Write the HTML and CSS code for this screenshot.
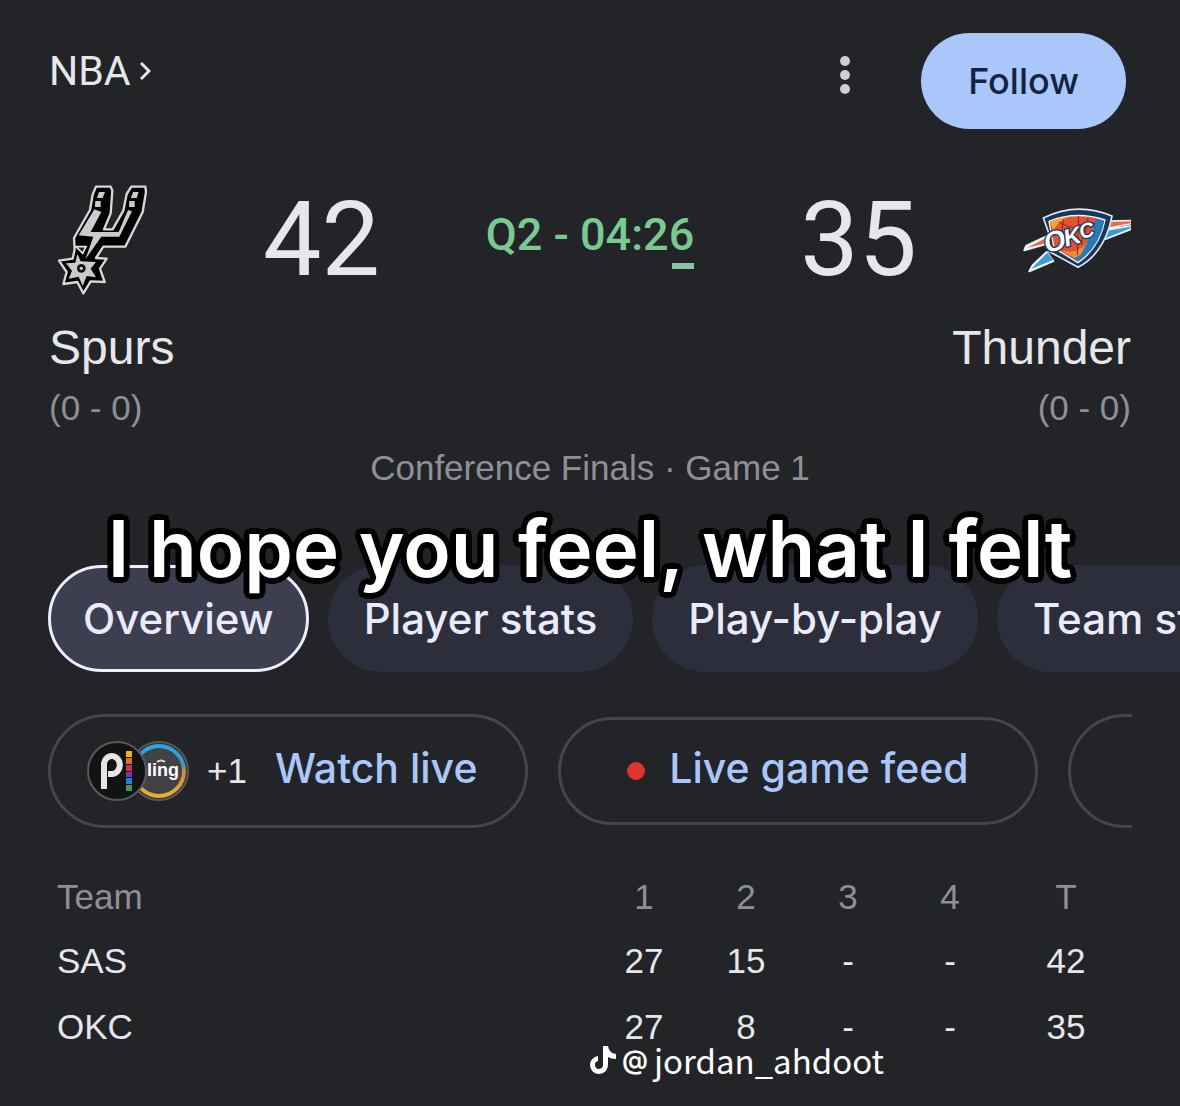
FILE: index.html
```html
<!DOCTYPE html>
<html lang="en">
<head>
  <meta charset="UTF-8">
  <meta name="viewport" content="width=device-width, initial-scale=1.0">
  <title>Spurs vs Thunder</title>
  <link rel="stylesheet" href="styles.css">
</head>
<body>
<!-- Header -->
<header class="top-bar">
  <a href="#" class="league">NBA
    <svg class="chevron" viewBox="0 0 12 20" aria-hidden="true"><path d="M2 2l8 8-8 8" fill="none" stroke="currentColor" stroke-width="3"/></svg>
  </a>
  <button type="button" class="more-btn" aria-label="More options">
    <svg viewBox="0 0 10 38" aria-hidden="true"><circle cx="5" cy="5" r="5"/><circle cx="5" cy="19" r="5"/><circle cx="5" cy="33" r="5"/></svg>
  </button>
  <button type="button" class="follow-btn">Follow</button>
</header>

<main>
  <!-- Score -->
  <section class="scoreboard">
    <div class="score-row">
      <svg class="team-logo" viewBox="27 40 324 340" role="img" aria-label="Spurs">
        <path d="M168 50L212 50L217 62L212 130L192 178L218 178L250 122L260 72L274 50L316 50L318 66L308 126L256 230L190 230L168 264L200 266L180 296L194 336L152 334L130 370L112 336L70 342L80 306L57 272L98 266L104 238L102 204L150 120L158 74Z" fill="#000" stroke="#d6d8da" stroke-width="7" stroke-linejoin="round"/>
        <path d="M163 118L184 126L152 186L236 186L264 120L276 124L238 200L184 200L136 268L160 200L116 196Z" fill="#c9cccf"/>
        <path d="M177 66h18l-7 18h-17zM166 93h16v18h-17zM279 66h17l-6 18h-17zM268 93h16v18h-17z" fill="#c9cccf"/>
        <path d="M108 230h30l-10 20z" fill="#232428" stroke="#e4e4e4" stroke-width="5"/>
        <path d="M112 252L122 274L168 276L152 296L168 322L140 318L128 348L116 320L86 326L96 302L78 280L106 278Z" fill="#c9cccf"/>
        <circle cx="124" cy="295" r="13" fill="#111"/>
        <circle cx="124" cy="295" r="5" fill="#c9cccf"/>
      </svg>
      <span class="score">42</span>
      <span class="clock">Q2 - 04:2<span class="tick">6</span></span>
      <span class="score">35</span>
      <svg class="team-logo" viewBox="39 45 324 210" role="img" aria-label="Thunder">
        <path d="M112 138L48 168l-5 13 68-20zM110 186l-42 40-10 18 72-31zM292 94l72-2v8l-64 14zM292 120l72-12v9l-78 30z" fill="#e9f2f7" stroke="#e9f2f7" stroke-width="6" stroke-linejoin="round"/>
        <path d="M112 142l-60 31 60-14zM294 96l68-2v6l-66 12z" fill="#ea6a4c"/>
        <path d="M112 188l-48 48 66-26zM292 122l70-12v5l-74 29z" fill="#3d9bd4"/>
        <path d="M100 84q100-50 206-6l-8 34q-28 86-94 120-50-28-88-48l2-50z" fill="#17375f" stroke="#dde9f2" stroke-width="5" stroke-linejoin="round"/>
        <path d="M117 94q82-33 168-4-16 84-81 128-36-22-72-44z" fill="#e4532d" stroke="#eef4f8" stroke-width="4"/>
        <path d="M119 96q28-12 62-17-38 14-50 42z" fill="#f6a531"/>
        <path d="M256 86l27 6q-16 80-79 122l-24-14q64-28 76-114z" fill="#1f7dbd"/>
        <path d="M150 180q54 18 84-26l-22 40-18 11z" fill="#f08a35"/>
        <path d="M206 78q-2 66-4 116M146 96q56 36 110 4M160 88q-10 46 14 86M234 84q-4 46-24 76" fill="none" stroke="#7b2a36" stroke-width="3"/>
        <g class="okc-text">
          <text transform="rotate(-16 110 190)" x="110" y="190" font-size="84">O</text>
          <text transform="rotate(-16 168 170)" x="168" y="170" font-size="72">K</text>
          <text transform="rotate(-16 214 148)" x="214" y="148" font-size="62">C</text>
        </g>
      </svg>
    </div>
    <div class="names-row">
      <div class="team">
        <a href="#" class="team-name">Spurs</a>
        <span class="record">(0 - 0)</span>
      </div>
      <div class="team team-right">
        <a href="#" class="team-name">Thunder</a>
        <span class="record">(0 - 0)</span>
      </div>
    </div>
    <p class="stage">Conference Finals · Game 1</p>
  </section>

  <!-- Tabs -->
  <nav class="tabs">
    <button type="button" class="tab active">Overview</button>
    <button type="button" class="tab">Player stats</button>
    <button type="button" class="tab">Play-by-play</button>
    <button type="button" class="tab">Team stats</button>
    <p class="caption">I hope you feel, what I felt</p>
  </nav>

  <!-- Watch links -->
  <div class="actions">
    <a href="#" class="action action-watch">
      <svg class="providers" viewBox="0 0 102 60" aria-hidden="true">
        <defs>
          <linearGradient id="ring" x1="0" y1="0" x2="0" y2="1">
            <stop offset="0.1" stop-color="#2ba6df"/>
            <stop offset="0.4" stop-color="#3a98bd"/>
            <stop offset="0.5" stop-color="#d08a2e"/>
            <stop offset="1" stop-color="#e5b32f"/>
          </linearGradient>
        </defs>
        <circle cx="72" cy="30" r="29" fill="#2b2c2e" stroke="#58595c" stroke-width="2"/>
        <circle cx="72" cy="30" r="25" fill="#414245" stroke="url(#ring)" stroke-width="4"/>
        <text class="sling-text" x="50" y="35">sling</text>
        <path d="M70 21q4-3 8 0" fill="none" stroke="#ddd" stroke-width="2"/>
        <circle cx="30" cy="30" r="29" fill="#131314" stroke="#58595c" stroke-width="2"/>
        <path d="M17 48V22a8 9 0 1 1 8 11h-4" fill="none" stroke="#e6e6e6" stroke-width="6"/>
        <path d="M39 10h6v6h-6z" fill="#edb62c"/><path d="M39 17h6v6h-6z" fill="#e36a2c"/>
        <path d="M39 24h6v6h-6z" fill="#d22b4b"/><path d="M39 31h6v5h-6z" fill="#6d3bb5"/>
        <path d="M39 37h6v6h-6z" fill="#2685cf"/><path d="M39 44h6v6h-6z" fill="#3a9b50"/>
      </svg>
      <span class="plus">+1</span>
      <span class="action-label">Watch live</span>
    </a>
    <a href="#" class="action action-feed">
      <span class="live-dot"></span>
      <span class="action-label">Live game feed</span>
    </a>
    <a href="#" class="action" aria-label="More"></a>
  </div>

  <!-- Line score -->
  <section class="line-score">
    <table>
      <thead>
        <tr><th class="col-team">Team</th><th>1</th><th>2</th><th>3</th><th>4</th><th class="col-total">T</th></tr>
      </thead>
      <tbody>
        <tr><td class="col-team">SAS</td><td>27</td><td>15</td><td>-</td><td>-</td><td>42</td></tr>
        <tr><td class="col-team">OKC</td><td>27</td><td>8</td><td>-</td><td>-</td><td>35</td></tr>
      </tbody>
    </table>
    <div class="credit">
      <svg class="note" viewBox="0 0 26 30" aria-hidden="true"><path d="M13 1h5q1 7 8 8v5q-5 0-8-2v8a9 9 0 1 1-10-9v5a4 4 0 1 0 5 4z" fill="#fff"/></svg>
      <span class="at">@</span>
      <span>jordan_ahdoot</span>
    </div>
  </section>
</main>
</body>
</html>
```
FILE: styles.css
```css
:root {
  --bg: #232428;
  --text: #e6e7eb;
  --muted: #8f9094;
  --blue: #a9c7fa;
  --green: #78ca90;
  --chip: #2d2e3b;
  --line: #454649;
}

* {
  margin: 0;
  padding: 0;
  box-sizing: border-box;
}

body {
  background-color: var(--bg);
  color: var(--text);
  font-family: "Liberation Sans", Arial, sans-serif;
}

a {
  color: inherit;
  text-decoration: none;
}

button {
  border: none;
  cursor: pointer;
}

/* Header */
.top-bar {
  display: flex;
  align-items: center;
  padding: 33px 54px 0 49px;
}

.league {
  display: flex;
  align-items: center;
  gap: 8px;
  margin-right: auto;
  padding-bottom: 20px;
  font-family: Roboto, sans-serif;
  font-size: 41px;
  line-height: 48px;
}

.chevron {
  width: 12px;
  height: 20px;
}

.more-btn {
  display: flex;
  margin-right: 71px;
  padding-bottom: 12px;
  background: none;
}

.more-btn svg {
  width: 10px;
  height: 38px;
  fill: #cfcdd6;
}

.follow-btn {
  padding: 0 47px;
  border-radius: 48px;
  background-color: var(--blue);
  color: #14233f;
  font-family: Inter, sans-serif;
  font-size: 36px;
  font-weight: 500;
  line-height: 96px;
}

/* Score */
.scoreboard {
  padding: 54px 49px 0;
}

.score-row {
  display: flex;
  justify-content: space-between;
  align-items: center;
}

.team-logo {
  width: 108px;
  height: 114px;
}

.okc-text {
  fill: #fff;
  stroke: #17375f;
  stroke-width: 8px;
  stroke-linejoin: round;
  paint-order: stroke;
  font-weight: bold;
  font-style: italic;
}

.score {
  font-family: Roboto, sans-serif;
  font-size: 104px;
  line-height: 114px;
}

.clock {
  padding-bottom: 10px;
  color: var(--green);
  font-family: Roboto, sans-serif;
  font-size: 45px;
  font-weight: 500;
  line-height: 50px;
}

.tick {
  position: relative;
}

.tick::after {
  content: "";
  position: absolute;
  right: 0;
  bottom: -8px;
  width: 22px;
  height: 6px;
  background-color: #8cc3a4;
}

.names-row {
  display: flex;
  justify-content: space-between;
  padding-top: 21px;
}

.team {
  display: flex;
  flex-direction: column;
}

.team-right {
  align-items: flex-end;
}

.team-name {
  font-size: 48px;
  line-height: 60px;
}

.record,
.stage {
  color: var(--muted);
  font-size: 35px;
  line-height: 60px;
}

.stage {
  text-align: center;
}

/* Tabs */
.tabs {
  position: relative;
  display: flex;
  gap: 19px;
  padding: 67px 0 0 48px;
  overflow: hidden;
}

.tab {
  flex: none;
  height: 107px;
  padding: 0 36px;
  border-radius: 54px;
  background-color: var(--chip);
  color: #e9eafb;
  font-family: Inter, sans-serif;
  font-size: 42px;
  font-weight: 500;
}

.tab.active {
  padding: 0 32px;
  border: 3px solid #eeeefa;
  background-color: #3d3f51;
}

.caption {
  position: absolute;
  top: 0;
  left: 0;
  width: 100%;
  color: #fff;
  font-family: Inter, sans-serif;
  font-size: 78px;
  font-weight: 600;
  line-height: 102px;
  text-align: center;
  white-space: nowrap;
  text-shadow:
    6px 0 #000, 5px 3px #000, 4px 4px #000, 3px 5px #000,
    0 6px #000, -3px 5px #000, -4px 4px #000, -5px 3px #000,
    -6px 0 #000, -5px -3px #000, -4px -4px #000, -3px -5px #000,
    0 -6px #000, 3px -5px #000, 4px -4px #000, 5px -3px #000;
}

/* Watch links */
.actions {
  display: flex;
  align-items: center;
  gap: 30px;
  margin: 42px 48px 0;
  overflow: hidden;
}

.action {
  display: flex;
  flex: none;
  justify-content: center;
  align-items: center;
  width: 480px;
  height: 114px;
  border: 3px solid var(--line);
  border-radius: 57px;
  color: var(--blue);
  font-family: Inter, sans-serif;
  font-size: 41px;
  font-weight: 500;
}

.action-label {
  padding-bottom: 6px;
}

.action-watch {
  justify-content: flex-start;
  gap: 18px;
  padding-left: 36px;
}

.action-feed {
  gap: 24px;
  height: 108px;
}

.providers {
  width: 102px;
  height: 60px;
}

.sling-text {
  fill: #fff;
  font-family: "Liberation Sans", Arial, sans-serif;
  font-size: 18px;
  font-weight: bold;
}

.plus {
  margin-right: 10px;
  color: var(--text);
  font-family: "Liberation Sans", Arial, sans-serif;
  font-size: 35px;
  font-weight: normal;
}

.live-dot {
  width: 18px;
  height: 18px;
  border-radius: 50%;
  background-color: #dc362e;
}

/* Line score */
.line-score {
  position: relative;
  padding: 38px 49px 45px;
}

table {
  width: 100%;
  border-collapse: collapse;
  table-layout: fixed;
}

th,
td {
  width: 102px;
  height: 66px;
  font-size: 35px;
  font-weight: normal;
  text-align: center;
}

th {
  height: 62px;
  color: var(--muted);
}

.col-team {
  width: auto;
  padding-left: 8px;
  text-align: left;
}

.col-total {
  width: 130px;
}

.credit {
  position: absolute;
  bottom: 20px;
  left: 50%;
  display: flex;
  align-items: center;
  gap: 6px;
  color: #fff;
  font-family: "Noto Sans CJK SC", "Noto Sans", sans-serif;
  font-size: 33px;
  line-height: 50px;
}

.note {
  width: 26px;
  height: 30px;
}

.at {
  font-family: Inter, sans-serif;
  font-size: 26px;
  font-weight: 600;
}
```
